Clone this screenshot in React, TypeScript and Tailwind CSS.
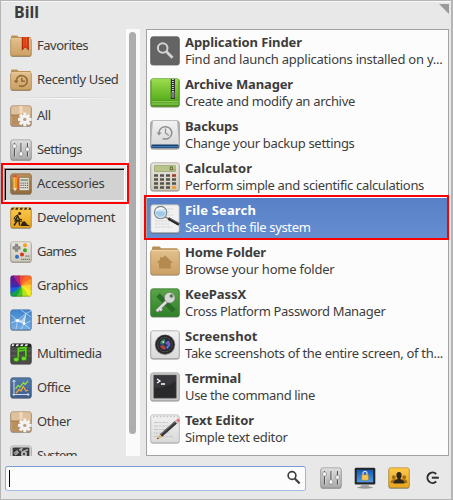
import { useLayoutEffect, useRef } from 'react';
import type { ReactNode } from 'react';

/* One line of text whose tracking is adjusted so that it is `width` pixels long. */
function Label({ text, width, className = '' }: { text: string; width: number; className?: string }) {
  const ref = useRef<HTMLSpanElement>(null);
  useLayoutEffect(() => {
    const el = ref.current;
    if (!el) return;
    el.style.letterSpacing = '0px';
    const natural = el.getBoundingClientRect().width;
    el.style.letterSpacing = `${(width - natural) / text.length}px`;
  }, [text, width]);
  return (
    <span ref={ref} className={`block w-max whitespace-nowrap ${className}`}>
      {text}
    </span>
  );
}

function Defs() {
  return (
    <svg className="absolute size-0" aria-hidden="true">
      <defs>
        <linearGradient id="tan" x2="0" y2="1"><stop stopColor="#e2c08d" /><stop offset="1" stopColor="#cba064" /></linearGradient>
        <linearGradient id="silver" x2="0" y2="1"><stop stopColor="#dedede" /><stop offset="1" stopColor="#a9a9a9" /></linearGradient>
        <linearGradient id="paper" x2="0" y2="1"><stop stopColor="#f2f2f2" /><stop offset="1" stopColor="#d9d9d9" /></linearGradient>
        <linearGradient id="wood" x2="0" y2="1"><stop stopColor="#b9905b" /><stop offset="1" stopColor="#936a39" /></linearGradient>
        <linearGradient id="amber" x2="0" y2="1"><stop stopColor="#fbc94c" /><stop offset="1" stopColor="#e9a41c" /></linearGradient>
        <linearGradient id="sky" x2="0" y2="1"><stop stopColor="#3f83cc" /><stop offset="1" stopColor="#75b0e6" /></linearGradient>
        <linearGradient id="steel" x2="0" y2="1"><stop stopColor="#547aa8" /><stop offset="1" stopColor="#3c5f8e" /></linearGradient>
        <linearGradient id="lime" x2="0" y2="1"><stop stopColor="#9bdc4c" /><stop offset="1" stopColor="#57ad1c" /></linearGradient>
        <linearGradient id="green" x2="0" y2="1"><stop stopColor="#5aa548" /><stop offset="1" stopColor="#2f8029" /></linearGradient>
        <linearGradient id="cream" x2="0" y2="1"><stop stopColor="#e9e7df" /><stop offset="1" stopColor="#cfcabb" /></linearGradient>
        <linearGradient id="screen" x2="0" y2="1"><stop stopColor="#1258b8" /><stop offset="1" stopColor="#4f9bea" /></linearGradient>
        <clipPath id="tile"><rect x=".5" y=".5" width="21" height="21" rx="2" /></clipPath>
      </defs>
    </svg>
  );
}

function Small({ children }: { children: ReactNode }) {
  return <svg viewBox="0 0 22 22" className="size-[22px] shrink-0">{children}</svg>;
}

function Tile({ fill, stroke }: { fill: string; stroke: string }) {
  return (
    <>
      <rect x=".5" y="1.2" width="21" height="20.6" rx="2.2" fill="#555" opacity=".65" />
      <rect x=".8" y=".8" width="20.4" height="20" rx="2" fill={fill} stroke={stroke} strokeWidth=".7" />
    </>
  );
}

function Folder() {
  return (
    <>
      <path d="M1 4V1.8Q1 .6 2.2.6H7.2L8.6 2H20Q21 2 21 3.5V6H1Z" fill="#bd9155" />
      <rect x=".5" y="3.5" width="21" height="18.3" rx="2" fill="#7c6a50" />
      <rect x=".7" y="3" width="20.6" height="17.8" rx="1.8" fill="url(#tan)" stroke="#be9355" strokeWidth=".6" />
      <path d="M1.5 3.7H20.5" stroke="#f0d3a2" strokeWidth=".8" />
    </>
  );
}

const Favorites = () => (
  <Small>
    <Folder />
    <path d="M11.8 2H18.8V15.8L15.3 12.2 11.8 15.8Z" fill="#a8280c" />
    <path d="M12.8 2H17.8V14L15.3 11.2 12.8 14Z" fill="#e33816" />
    <path d="M14 2V11M16.5 2V11" stroke="#f35f22" strokeWidth=".8" />
  </Small>
);

const Recent = () => (
  <Small>
    <Folder />
    <g fill="none" stroke="#946a34" strokeWidth="1.7">
      <path d="M6.2 12A5.5 5.3 0 1 1 9 16.6" />
      <path d="M11.8 8.8V12.2H15" strokeWidth="1.5" />
    </g>
    <path d="M3.6 11.5H8.6L6.1 14.5Z" fill="#946a34" />
  </Small>
);

const Package = () => (
  <Small>
    <Tile fill="#cda77a" stroke="#a58360" />
    <path d="M1.3 2.8Q1.3 1.2 2.8 1.2H19.2Q20.7 1.2 20.7 2.8V9H1.3Z" fill="#dfc29d" />
    <path d="M1 10.3H21" stroke="#a47b4e" />
    <path d="M2 10.8H9V19.8H2Z" fill="#b9905c" />
    <path d="M9.3 1V8H12.7V1Z" fill="#f0dfc5" opacity=".8" />
    <g transform="translate(14.8 14.4)">
      <g fill="#a39a8e" transform="translate(0 .8)">
        <circle r="5.1" />
        <path d="M-1.7-7H1.7V6.8H-1.7ZM-7-1.7V1.7H7V-1.7Z" />
      </g>
      <g fill="#f4f3f1">
        <circle r="4.8" />
        <path d="M-1.5-6.8H1.5V6.8H-1.5Z" />
        <path d="M-1.5-6.8H1.5V6.8H-1.5Z" transform="rotate(45)" />
        <path d="M-1.5-6.8H1.5V6.8H-1.5Z" transform="rotate(90)" />
        <path d="M-1.5-6.8H1.5V6.8H-1.5Z" transform="rotate(135)" />
      </g>
      <circle r="1.7" fill="#b9a184" />
    </g>
  </Small>
);

const Sliders = () => (
  <Small>
    <Tile fill="url(#silver)" stroke="#999" />
    <path d="M4.5 4V17.5M11 4V17.5M17.5 4V17.5" stroke="#555" strokeWidth="1.1" />
    <path d="M5.6 4V17.5M12.1 4V17.5M18.6 4V17.5" stroke="#eee" strokeWidth=".5" />
    <g fill="#f7f7f7" stroke="#777" strokeWidth=".6">
      <rect x="2.7" y="5" width="3.6" height="4.2" rx="1.2" />
      <rect x="9.2" y="12.8" width="3.6" height="4.2" rx="1.2" />
      <rect x="15.7" y="8.2" width="3.6" height="4.2" rx="1.2" />
    </g>
  </Small>
);

const Accessories = () => (
  <Small>
    <Tile fill="url(#wood)" stroke="#8b653a" />
    <path d="M1 6H21M1 15H21" stroke="#c59b64" strokeWidth=".5" />
    <rect x="3" y="3" width="4" height="12" fill="#f6931e" />
    <path d="M4.3 4V15" stroke="#ffc558" strokeWidth="1" />
    <path d="M3 15H7L5 19.2Z" fill="#f3ddb2" /><path d="M4.4 17.5H5.6L5 19.2Z" fill="#333" />
    <rect x="3" y="2" width="4" height="2.2" rx=".7" fill="#e0503f" />
    <path d="M8.4 4.5V17.5" stroke="#d9531e" strokeWidth="1" />
    <rect x="9.2" y="4.5" width="10" height="13" rx=".8" fill="#e7e3d8" stroke="#756049" strokeWidth=".5" />
    <rect x="10.4" y="6" width="7.6" height="2.2" fill="#93a38b" />
    <path d="M10.4 10.2H18M10.4 12.4H18M10.4 14.6H18" stroke="#666" strokeWidth="1.2" strokeDasharray="1.3 .8" />
  </Small>
);

const Development = () => (
  <Small>
    <Tile fill="url(#amber)" stroke="#b6841f" />
    <path d="M1 1H21V3.5H1Z" fill="#f6bd35" />
    <path d="M1.6 .8H4L3.2 2.8H1ZM6 .8H8.4L7.6 2.8H5.2ZM10.4 .8H12.8L12 2.8H9.6ZM14.8 .8H17.2L16.4 2.8H14ZM19.2 .8H21V2.8H18.4Z" fill="#382d1b" />
    <circle cx="9.6" cy="6.5" r="1.5" fill="#2e2718" />
    <path d="M8 8.2 5.2 13.8 7 14 4 18.5M5.9 13.5 9.2 14 9.5 18.5M7.7 9 9.2 12.2 12 13" fill="none" stroke="#2e2718" strokeWidth="1.5" />
    <path d="M7.6 8 4.8 9.8 4 12.5" fill="none" stroke="#2e2718" />
    <path d="M4 11 14.3 16" stroke="#2e2718" strokeWidth=".8" />
    <path d="M10.5 19Q12.5 13.5 15 14.5L17.8 18H19.5V19Z" fill="#2e2718" />
  </Small>
);

const Games = () => (
  <Small>
    <Tile fill="url(#cream)" stroke="#aaa594" />
    <path d="M4.9 2.8H8.1V5.2H10.5V8.4H8.1V10.8H4.9V8.4H2.5V5.2H4.9Z" fill="#878781" />
    <circle cx="6.5" cy="6.8" r="1" fill="#aaa" />
    <circle cx="15" cy="4.2" r="2" fill="#f2a01e" />
    <circle cx="15" cy="9.2" r="2" fill="#3da62c" />
    <circle cx="12" cy="13.5" r="2" fill="#dc3217" />
    <circle cx="7" cy="15.8" r="2" fill="#2d6fc5" />
    <path d="M15.5 15.2H20M11 18.4H20" stroke="#77746a" strokeWidth="1.2" strokeDasharray="1.4 .6" />
  </Small>
);

/* Twelve coloured wedges that turn round the middle of the tile. */
const wheel = ['#f44a38', '#ff6a28', '#ff9a23', '#ffcf2c', '#f4ee24', '#b8e21b', '#4cc322', '#12a04a', '#1c5fe4', '#3a28b6', '#5c1c99', '#b02378'];
const Graphics = () => (
  <Small>
    <rect x=".5" y="1.2" width="21" height="20.6" rx="2.2" fill="#555" opacity=".65" />
    <g clipPath="url(#tile)">
      {wheel.map((c, i) => (
        <path key={c} d="M11 11Q8 4 11-7L22-5Q13 2 11 11Z" fill={c} transform={`rotate(${i * 30} 11 11)`} />
      ))}
    </g>
    <rect x=".8" y=".8" width="20.4" height="20" rx="2" fill="none" stroke="#444" strokeOpacity=".25" strokeWidth=".7" />
  </Small>
);

const Internet = () => (
  <Small>
    <Tile fill="url(#sky)" stroke="#4b79aa" />
    <path d="M1 14 7.5 11.5 16 4.5 21 2M7.5 11.5 14 15 21 12M14 15 16 4.5M7.5 11.5 6 20.5M14 15 11 20.5M1 6 7.5 11.5M11 1 16 4.5 21 8M14 15 20 20" stroke="#e3f2ff" strokeWidth=".7" strokeOpacity=".8" fill="none" />
    <path d="M3.5 10.5 12 10.8 16 4.5 14.6 14.6 6.5 12.8Z" fill="#fff" opacity=".6" />
    <circle cx="7.5" cy="11.5" r="1.5" fill="#fff" /><circle cx="14" cy="14.5" r="1.3" fill="#fff" />
  </Small>
);

const Multimedia = () => (
  <Small>
    <Tile fill="#4b4b49" stroke="#333" />
    <path d="M1 1H21V4H1Z" fill="#222" />
    <path d="M2 1.2H4.5L3.5 3.2H1.5ZM6.5 1.2H9L8 3.2H5.5ZM11 1.2H13.5L12.5 3.2H10ZM15.5 1.2H18L17 3.2H14.5Z" fill="#eee" />
    <path d="M1 8H21M1 13H21" stroke="#777" strokeWidth=".6" />
    <path d="M8.3 16V5.5L15.8 4.5V14.5" fill="none" stroke="#235f0d" strokeWidth="3.2" />
    <path d="M8.3 16V5.5L15.8 4.5V14.5" fill="none" stroke="#5fd022" strokeWidth="1.8" />
    <path d="M8.3 8 15.8 7" stroke="#5fd022" strokeWidth="1.6" />
    <ellipse cx="6.3" cy="16.5" rx="2.8" ry="2.2" fill="#6bdc2b" stroke="#235f0d" strokeWidth=".6" />
    <ellipse cx="13.9" cy="15.5" rx="2.8" ry="2.2" fill="#6bdc2b" stroke="#235f0d" strokeWidth=".6" />
  </Small>
);

const Office = () => (
  <Small>
    <Tile fill="url(#steel)" stroke="#36547d" />
    <path d="M4 3V17.5H19M2.5 5 4 3 5.5 5M17.5 16 19 17.5 17.5 19M2.5 17.5H4V19" fill="none" stroke="#d0dceb" strokeWidth="1" />
    <path d="M5.5 12 8 8.5 10 10 13.5 5.5 15 7.5 18 4" fill="none" stroke="#8fdb4b" strokeWidth="1.3" />
    <path d="M6 16 9.2 12.5 11 14 13.2 9.5 16 14 18 13" fill="none" stroke="#f5a53a" strokeWidth="1.3" />
  </Small>
);

const System = () => (
  <Small>
    <Tile fill="#dadada" stroke="#aaa" />
    <rect x="2.6" y="2.6" width="16.8" height="16" rx="1" fill="#383838" />
    <path d="M4 8.5 7 6 8 7.5 5 10M9 5 12 3.5 11 6.5M12.5 7 18 4.5" stroke="#aaa" strokeWidth="1.5" fill="none" />
    <circle cx="14" cy="9" r="3" fill="#bbb" /><circle cx="14" cy="9" r="1.2" fill="#444" />
  </Small>
);

function Big({ children }: { children: ReactNode }) {
  return <svg viewBox="0 0 30 30" className="size-[30px] shrink-0">{children}</svg>;
}

function BigTile({ fill, stroke }: { fill: string; stroke: string }) {
  return (
    <>
      <rect x=".5" y="1.4" width="29" height="28.1" rx="2.5" fill="#444" opacity=".6" />
      <rect x=".8" y=".8" width="28.4" height="27.8" rx="2.2" fill={fill} stroke={stroke} strokeWidth=".8" />
    </>
  );
}

const Finder = () => (
  <Big>
    <BigTile fill="#646464" stroke="#5a5a5a" />
    <circle cx="12.7" cy="12" r="4.8" fill="none" stroke="#d4d4d4" strokeWidth="2" />
    <path d="M16.3 15.6 22.5 21.8" stroke="#d4d4d4" strokeWidth="2.8" />
  </Big>
);

const Archive = () => (
  <Big>
    <BigTile fill="#4b951b" stroke="#589c2b" />
    <path d="M1.5 2Q1.5 1 3 1H27Q28.5 1 28.5 2V22.5H1.5Z" fill="url(#lime)" />
    <path d="M1.5 23.8H28.5M1.5 26H28.5" stroke="#a0df66" strokeWidth="1" />
    <path d="M20.8 1H25V21H20.8Z" fill="#2f332d" />
    <path d="M22.9 1V14" stroke="#d8d8d8" strokeWidth="1.8" strokeDasharray="1 1" />
    <rect x="21.9" y="14" width="2" height="5.5" rx=".6" fill="#666" stroke="#bbb" strokeWidth=".6" />
  </Big>
);

const Backups = () => (
  <Big>
    <BigTile fill="#b9b9b9" stroke="#999" />
    <path d="M1.5 25.5 3 23.5H27L28.5 25.5V28H1.5Z" fill="#173d68" />
    <path d="M2 26.7H28" stroke="#4385c8" strokeWidth="1.2" />
    <path d="M3 1H27L28.8 23Q28.8 24.5 27 24.5H3Q1.2 24.5 1.2 23Z" fill="url(#paper)" />
    <g fill="none" stroke="#8e8e8e" strokeWidth="1.5">
      <path d="M9 13A6.4 6.2 0 1 1 12.7 18.5" />
      <path d="M15.5 8.5V13L18.8 15.5" strokeWidth="1.3" />
    </g>
    <path d="M6.5 12.5H11.7L9.1 15.5Z" fill="#8e8e8e" />
  </Big>
);

const Calculator = () => (
  <Big>
    <BigTile fill="url(#cream)" stroke="#aaa697" />
    <rect x="4.5" y="3.5" width="21" height="6" rx=".5" fill="#b9c487" stroke="#8e9569" strokeWidth=".6" />
    <rect x="20.2" y="5" width="2.2" height="2.8" fill="none" stroke="#4d5830" strokeWidth=".8" />
    <path d="M23.6 7.9H24.5" stroke="#4d5830" strokeWidth=".8" />
    <g strokeWidth="2.6">
      <path d="M4 13.5H20M4 17.5H20M4 21.5H20M4 25.5H20" stroke="#55534e" strokeDasharray="4 2" />
      <path d="M22 13.5H26" stroke="#a33d30" />
      <path d="M22 17.5H26M22 21.5H26" stroke="#55534e" />
      <path d="M22 25.5H26" stroke="#ef9a29" />
    </g>
  </Big>
);

const FileSearch = () => (
  <Big>
    <BigTile fill="#f1f1f1" stroke="#b5b5b5" />
    <path d="M5 5H23M5 8H21M5 11H24M5 14H20M5 17H23M5 20H19M5 23H22" stroke="#cbcbcb" strokeWidth=".8" strokeDasharray="3 .7 1.8 .7" />
    <circle cx="10.6" cy="8.6" r="6.2" fill="#d3e7f5" stroke="#7c858a" strokeWidth="1.1" />
    <path d="M5 8.5Q10 6 16 8.5Q14 13 9 13Z" fill="#8cbde2" opacity=".7" />
    <path d="M6.3 5.7Q10 2.8 14 5" stroke="#fff" strokeWidth="1.3" fill="none" />
    <path d="M15 12.8 19 15" stroke="#8b8b8b" strokeWidth="1.8" />
    <path d="M18.4 14.6 29 20.4" stroke="#242424" strokeWidth="2.8" />
    <path d="M19.4 14.4 29 19.5" stroke="#777" strokeWidth=".7" />
  </Big>
);

const Home = () => (
  <Big>
    <path d="M2 5V2Q2 .6 3.5.6H9.5L11.2 2.2H26.5Q28 2.2 28 4V7H2Z" fill="#b98e54" />
    <rect x=".5" y="4.5" width="29" height="25" rx="2.3" fill="#76654e" opacity=".9" />
    <rect x=".8" y="3.8" width="28.4" height="24.8" rx="2.2" fill="url(#tan)" stroke="#c19a62" strokeWidth=".7" />
    <path d="M2 4.5H28" stroke="#eed3a6" />
    <path d="M15 9.5 22.5 16.2V17H20.8V22.5H9V17H7.3V16.2L10 13.7V11.2H12V12Z" fill="#b58a50" />
  </Big>
);

const KeePass = () => (
  <Big>
    <BigTile fill="url(#green)" stroke="#387c30" />
    <path d="M8 7 24 23" stroke="#286e27" strokeWidth="5" />
    <path d="M17.5 12.5 6.5 23.5M9 20.5 11.5 23" stroke="#777" strokeWidth="3.6" />
    <path d="M18 12 6.7 23.2M9.5 20 11.8 22.3" stroke="#dedede" strokeWidth="2.6" />
    <circle cx="19.7" cy="9.7" r="5.3" fill="#d8d8d8" stroke="#777" strokeWidth=".6" />
    <circle cx="21.4" cy="8" r="1.8" fill="#397b32" stroke="#aaa" strokeWidth=".6" />
  </Big>
);

const Camera = () => (
  <Big>
    <BigTile fill="url(#paper)" stroke="#aaa" />
    <circle cx="15" cy="14.8" r="10.2" fill="#777" />
    <circle cx="15" cy="14.6" r="9.5" fill="#252528" />
    <circle cx="15" cy="14.6" r="7.2" fill="none" stroke="#555" strokeWidth=".8" />
    <circle cx="15" cy="14.6" r="5.5" fill="#243268" />
    <path d="M10 13Q11 9 15 9V13L12 15Z" fill="#367d58" />
    <path d="M15 13 18.5 10.5Q21 13 20 17Z" fill="#7d5bbd" />
    <path d="M10 16 14 15 16 19Q12 20.5 10 16Z" fill="#bb4136" />
    <path d="M16 17 19 15 18 19Z" fill="#4c94da" />
    <circle cx="13.2" cy="12" r=".9" fill="#dfe8cf" />
  </Big>
);

const Terminal = () => (
  <Big>
    <BigTile fill="#c9c9c9" stroke="#aaa" />
    <rect x="3.6" y="3" width="22.8" height="23.3" rx=".6" fill="#29292c" stroke="#7e7e7e" strokeWidth=".6" />
    <path d="M4 16Q17 15.5 26 9V3.4H4Z" fill="#47474c" opacity=".5" />
    <path d="M7 7 10 9 7 11M11 12H15" stroke="#fff" strokeWidth="1.3" fill="none" />
  </Big>
);

const Editor = () => (
  <Big>
    <BigTile fill="url(#paper)" stroke="#c3c3c3" />
    <path d="M3 2.3H28" stroke="#c4c4c4" strokeWidth="1.8" strokeDasharray="1.7 1.7" />
    <path d="M4 8.5H19M4 12H22M4 15.5H19M4 19H20M4 22.5H23" stroke="#c6c6c6" strokeWidth="1" strokeDasharray="4 .8 2 .8" />
    <path d="M11 21.5 26.5 7.8" stroke="#393939" strokeWidth="3.4" />
    <path d="M10.4 20.6 25.2 7.5" stroke="#858585" strokeWidth=".9" />
    <path d="M9.6 20.4 12.4 23.3 7 25.2Z" fill="#e4b36d" /><path d="M7.8 23.5 8.9 24.6 7 25.2Z" fill="#222" />
    <path d="M25.8 8.5 27.8 6.7" stroke="#ccc" strokeWidth="3.4" /><path d="M27.2 7.2 29.2 5.5" stroke="#ec7580" strokeWidth="3.2" />
  </Big>
);

const LockScreen = () => (
  <Small>
    <path d="M7.5 18H14.5L16 20.5H6Z" fill="#aaa" /><ellipse cx="11" cy="20.5" rx="8" ry="1.2" fill="#999" />
    <rect x=".7" y=".8" width="20.6" height="16.8" rx="1.4" fill="#252525" />
    <rect x="2.8" y="2.8" width="16.4" height="12.5" fill="url(#screen)" />
    <path d="M9 8V6.3A2 2 0 0 1 13 6.3V8" fill="none" stroke="#ddd" strokeWidth="1.2" />
    <rect x="7.8" y="7.8" width="6.6" height="5.5" rx=".4" fill="#f2c85c" stroke="#a9791b" strokeWidth=".5" />
  </Small>
);

const Users = () => (
  <Small>
    <Tile fill="url(#amber)" stroke="#b88a2f" />
    <g fill="#a46b16"><circle cx="5.8" cy="10.2" r="1.9" /><circle cx="16.2" cy="10.2" r="1.9" /><path d="M2.5 16Q2.8 12.2 6 12.2H16Q19.2 12.2 19.5 16Z" /></g>
    <g fill="#2b251a"><ellipse cx="11" cy="8.2" rx="2.6" ry="3.2" /><path d="M5.5 16.5Q5.5 13.2 9.5 12.2V10H12.5V12.2Q16.5 13.2 16.5 16.5Z" /></g>
  </Small>
);

const LogOut = () => (
  <Small>
    <path d="M14.2 6.9A5.2 5.2 0 1 0 14.2 14.5" fill="none" stroke="#2d2d2d" strokeWidth="2" />
    <path d="M9.8 10.7H16.8" stroke="#2d2d2d" strokeWidth="2" />
  </Small>
);

const places = [
  { name: 'Favorites', width: 52, Icon: Favorites },
  { name: 'Recently Used', width: 82.5, Icon: Recent },
];

const categories = [
  { name: 'All', width: 14.5, Icon: Package },
  { name: 'Settings', width: 46, Icon: Sliders },
  { name: 'Accessories', width: 68.5, Icon: Accessories },
  { name: 'Development', width: 79, Icon: Development },
  { name: 'Games', width: 40, Icon: Games },
  { name: 'Graphics', width: 52, Icon: Graphics },
  { name: 'Internet', width: 49, Icon: Internet },
  { name: 'Multimedia', width: 65.5, Icon: Multimedia },
  { name: 'Office', width: 34.5, Icon: Office },
  { name: 'Other', width: 35, Icon: Package },
  { name: 'System', width: 41, Icon: System },
];

const apps = [
  { name: 'Application Finder', nw: 117, info: 'Find and launch applications installed on y...', iw: 257.5, Icon: Finder },
  { name: 'Archive Manager', nw: 108, info: 'Create and modify an archive', iw: 170, Icon: Archive },
  { name: 'Backups', nw: 53.5, info: 'Change your backup settings', iw: 169.5, Icon: Backups },
  { name: 'Calculator', nw: 67, info: 'Perform simple and scientific calculations', iw: 239, Icon: Calculator },
  { name: 'File Search', nw: 71, info: 'Search the file system', iw: 125.5, Icon: FileSearch },
  { name: 'Home Folder', nw: 81, info: 'Browse your home folder', iw: 149.5, Icon: Home },
  { name: 'KeePassX', nw: 61, info: 'Cross Platform Password Manager', iw: 200.5, Icon: KeePass },
  { name: 'Screenshot', nw: 72.5, info: 'Take screenshots of the entire screen, of th...', iw: 258, Icon: Camera },
  { name: 'Terminal', nw: 56, info: 'Use the command line', iw: 130, Icon: Terminal },
  { name: 'Text Editor', nw: 69, info: 'Simple text editor', iw: 102.5, Icon: Editor },
];

function Category({ name, width, Icon }: { name: string; width: number; Icon: () => ReactNode }) {
  const active = name === 'Accessories';
  return (
    <li className="relative flex h-[34px] shrink-0 items-center gap-1 pl-[10px]">
      {active && (
        <>
          <span className="absolute top-px left-[4px] h-[33px] w-[121px] border border-t-[#8c8c8c] border-r-white border-b-white border-l-[#8c8c8c] bg-[#d2d2d2]">
            <span className="block h-full border-t border-l border-black" />
          </span>
          <span className="absolute -top-[4px] left-px h-[41px] w-[128px] border-2 border-[#fa0000]" />
        </>
      )}
      <span className="relative"><Icon /></span>
      <Label text={name} width={width} className="relative pb-[2px] pl-px" />
    </li>
  );
}

export default function App() {
  return (
    <div className="flex h-[500px] w-[453px] flex-col overflow-hidden border-t border-r-2 border-b border-l border-[#b5b5b5] bg-[#e8e8e8] font-['Noto_Sans','Open_Sans',sans-serif] text-[13px] leading-[17px] text-[#3c3c3c]">
      <Defs />
      <header className="flex h-[28px] shrink-0 justify-between border-t border-[#f8f8f8] pl-[13px]">
        <h1 className="text-[16px] leading-[21px] font-bold"><Label text="Bill" width={25} /></h1>
        <svg viewBox="0 0 10 10" className="mt-[2px] mr-[2px] size-[10px]"><path d="M0 0H10V10Z" fill="#999" /></svg>
      </header>

      <main className="flex h-[427px] shrink-0">
        <nav className="-ml-px flex w-[126px] shrink-0 flex-col">
          <div className="h-[427px] w-[130px] overflow-hidden">
            <ul className="flex flex-col">
              {places.map((p) => <Category key={p.name} {...p} />)}
            </ul>
            <div className="mr-[9px] ml-[7px] h-[2px] bg-linear-to-r from-transparent via-[#fafafa] to-transparent">
              <div className="h-px bg-linear-to-r from-[#e8e8e8] via-[#d4d4d4] to-[#e8e8e8]" />
            </div>
            <ul className="relative z-10 flex flex-col">
              {categories.map((c) => <Category key={c.name} {...c} />)}
            </ul>
          </div>
        </nav>
        <div className="w-[14px] shrink-0 bg-[#fafafa] pt-[3px] pl-[3px]">
          <div className="h-[402px] w-[7px] rounded-full bg-[#adadad]" />
        </div>
        <ul className="ml-[6px] w-[303px] shrink-0 border border-[#a3a3a3] bg-[#fcfcfc]">
          {apps.map(({ name, nw, info, iw, Icon }) => {
            const selected = name === 'File Search';
            return (
              <li key={name} className={`relative flex h-[42px] items-center pl-[3px] ${selected ? 'bg-linear-to-b from-[#5780c6] to-[#678fd0] text-white' : ''}`}>
                {selected && <span className="absolute -top-[3px] -left-[3px] h-[45px] w-[305px] border-2 border-[#fa0000]" />}
                <Icon />
                <div className="relative -top-px ml-[5px] pt-px">
                  <Label text={name} width={nw} className="font-bold" />
                  <Label text={info} width={iw} />
                </div>
              </li>
            );
          })}
        </ul>
      </main>

      <footer className="flex h-[43px] shrink-0 items-center pt-px pl-[4px]">
        <div className="flex h-[25px] w-[301px] shrink-0 items-center justify-between rounded-[3px] border border-t-[#789bd2] border-r-[#9bb6e0] border-b-[#a2bee7] border-l-[#89a9dc] bg-[#fcfcfc] pr-[3px] pl-[3px]">
          <span className="h-[17px] w-px bg-black" />
          <svg viewBox="0 0 16 16" className="size-4">
            <circle cx="6" cy="5.5" r="3.9" fill="none" stroke="#3c3c3c" strokeWidth="1.6" />
            <path d="M8.8 8.5 13.6 13.4" stroke="#3c3c3c" strokeWidth="2.2" />
          </svg>
        </div>
        <div className="-mt-px ml-[14px] flex gap-3">
          <Sliders />
          <LockScreen />
          <Users />
          <LogOut />
        </div>
      </footer>
    </div>
  );
}
